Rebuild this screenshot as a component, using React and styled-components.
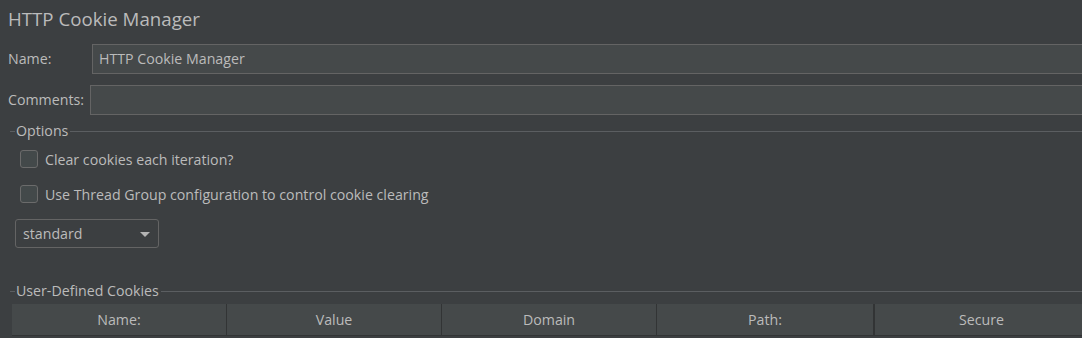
import React from "react";
import styled, { createGlobalStyle } from "styled-components";

const GlobalStyle = createGlobalStyle`
  html, body {
    margin: 0;
    padding: 0;
    background: #3c3f41;
    overflow: hidden;
  }
  body {
    font-family: "Open Sans", "Noto Sans", sans-serif;
    font-size: 14.2px;
    color: #bbbbbb;
  }
`;

const Page = styled.div`
  width: 1100px;
  display: flex;
  flex-direction: column;
`;

const Title = styled.div`
  margin-top: 7px;
  padding-left: 8px;
  font-size: 18.7px;
  line-height: 24px;
`;

const FieldRow = styled.div`
  display: flex;
  align-items: center;
  margin-top: ${(p) => p.$top}px;
  padding-left: 8px;
`;

const Label = styled.label`
  width: ${(p) => p.$width}px;
  flex: none;
  line-height: 18px;
`;

const TextInput = styled.div`
  flex: 1;
  height: 28px;
  box-sizing: content-box;
  border: 1px solid #646464;
  background: #45494a;
  padding-left: 6px;
  display: flex;
  align-items: center;
  line-height: 18px;
`;

const Legend = styled.div`
  display: flex;
  align-items: center;
  height: 18px;
  line-height: 18px;
  margin-top: ${(p) => p.$top}px;
  padding-left: 10px;
  &::before {
    content: "";
    width: 5px;
    height: 1px;
    background: #5b5e61;
    margin-right: 1px;
  }
  &::after {
    content: "";
    flex: 1;
    height: 1px;
    background: #5b5e61;
    margin-left: 2px;
  }
`;

const CheckRow = styled.label`
  display: flex;
  align-items: center;
  gap: 7px;
  height: 26px;
  margin-top: ${(p) => p.$top}px;
  padding-left: 20px;
`;

const Box = styled.span`
  width: 16px;
  height: 16px;
  border: 1px solid #6b6b6b;
  border-radius: 3px;
  background: #43494a;
  flex: none;
`;

const Combo = styled.div`
  margin: 12px 0 0 15px;
  width: 127px;
  height: 27px;
  border: 1px solid #646464;
  border-radius: 3px;
  background: #3c3f41;
  display: flex;
  align-items: center;
  justify-content: space-between;
  padding: 0 8px 0 7px;
  box-sizing: content-box;
`;

const Arrow = styled.span`
  width: 0;
  height: 0;
  border-left: 5px solid transparent;
  border-right: 5px solid transparent;
  border-top: 5px solid #b4b4b4;
  margin-top: 2px;
`;

const TableHeader = styled.div`
  margin: 4px 0 0 12px;
  display: grid;
  grid-template-columns: 214px 215px 215px 217px 215px;
  background: #45494a;
  border-bottom: 1px solid #323435;
`;

const HeaderCell = styled.div`
  height: 31px;
  display: flex;
  align-items: center;
  justify-content: center;
  border-left: ${(p) => (p.$first ? "none" : p.$thick ? "2px solid #323435" : "1px solid #323435")};
  line-height: 18px;
`;

const columns = ["Name:", "Value", "Domain", "Path:", "Secure"];

export default function App() {
  return (
    <>
      <GlobalStyle />
      <Page>
        <Title>HTTP Cookie Manager</Title>
        <FieldRow $top={13}>
          <Label $width={84}>Name:</Label>
          <TextInput>HTTP Cookie Manager</TextInput>
        </FieldRow>
        <FieldRow $top={11}>
          <Label $width={82}>Comments:</Label>
          <TextInput />
        </FieldRow>
        <Legend $top={7}>Options</Legend>
        <CheckRow $top={6}>
          <Box />
          Clear cookies each iteration?
        </CheckRow>
        <CheckRow $top={9}>
          <Box />
          Use Thread Group configuration to control cookie clearing
        </CheckRow>
        <Combo>
          <span>standard</span>
          <Arrow />
        </Combo>
        <Legend $top={34}>User-Defined Cookies</Legend>
        <TableHeader>
          {columns.map((c, i) => (
            <HeaderCell key={c} $first={i === 0} $thick={i === 4}>
              {c}
            </HeaderCell>
          ))}
        </TableHeader>
      </Page>
    </>
  );
}
